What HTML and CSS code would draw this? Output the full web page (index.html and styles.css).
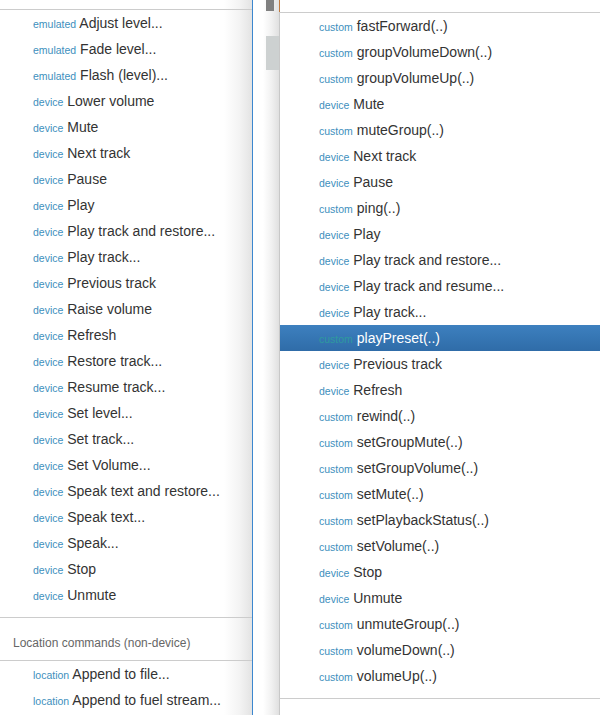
FILE: index.html
```html
<!DOCTYPE html>
<html>
<head>
<meta charset="utf-8">
<link rel="stylesheet" href="styles.css">
</head>
<body>
<div class="page">
  <div class="left-pane">
    <div class="group">
      <ul class="items">
        <li><span class="kind">emulated</span> Adjust level...</li>
        <li><span class="kind">emulated</span> Fade level...</li>
        <li><span class="kind">emulated</span> Flash (level)...</li>
        <li><span class="kind">device</span> Lower volume</li>
        <li><span class="kind">device</span> Mute</li>
        <li><span class="kind">device</span> Next track</li>
        <li><span class="kind">device</span> Pause</li>
        <li><span class="kind">device</span> Play</li>
        <li><span class="kind">device</span> Play track and restore...</li>
        <li><span class="kind">device</span> Play track...</li>
        <li><span class="kind">device</span> Previous track</li>
        <li><span class="kind">device</span> Raise volume</li>
        <li><span class="kind">device</span> Refresh</li>
        <li><span class="kind">device</span> Restore track...</li>
        <li><span class="kind">device</span> Resume track...</li>
        <li><span class="kind">device</span> Set level...</li>
        <li><span class="kind">device</span> Set track...</li>
        <li><span class="kind">device</span> Set Volume...</li>
        <li><span class="kind">device</span> Speak text and restore...</li>
        <li><span class="kind">device</span> Speak text...</li>
        <li><span class="kind">device</span> Speak...</li>
        <li><span class="kind">device</span> Stop</li>
        <li><span class="kind">device</span> Unmute</li>
      </ul>
    </div>
    <div class="group">
      <div class="group-header">Location commands (non-device)</div>
      <ul class="items">
        <li><span class="kind">location</span> Append to file...</li>
        <li><span class="kind">location</span> Append to fuel stream...</li>
      </ul>
    </div>
  </div>
  <div class="gutter">
    <div class="thumb-dark"></div>
    <div class="thumb-light"></div>
  </div>
  <div class="right-pane">
    <div class="combo-top"></div>
    <div class="dropdown">
      <ul class="items">
        <li><span class="kind">custom</span> fastForward(..)</li>
        <li><span class="kind">custom</span> groupVolumeDown(..)</li>
        <li><span class="kind">custom</span> groupVolumeUp(..)</li>
        <li><span class="kind">device</span> Mute</li>
        <li><span class="kind">custom</span> muteGroup(..)</li>
        <li><span class="kind">device</span> Next track</li>
        <li><span class="kind">device</span> Pause</li>
        <li><span class="kind">custom</span> ping(..)</li>
        <li><span class="kind">device</span> Play</li>
        <li><span class="kind">device</span> Play track and restore...</li>
        <li><span class="kind">device</span> Play track and resume...</li>
        <li><span class="kind">device</span> Play track...</li>
        <li class="active"><span class="kind">custom</span> playPreset(..)</li>
        <li><span class="kind">device</span> Previous track</li>
        <li><span class="kind">device</span> Refresh</li>
        <li><span class="kind">custom</span> rewind(..)</li>
        <li><span class="kind">custom</span> setGroupMute(..)</li>
        <li><span class="kind">custom</span> setGroupVolume(..)</li>
        <li><span class="kind">custom</span> setMute(..)</li>
        <li><span class="kind">custom</span> setPlaybackStatus(..)</li>
        <li><span class="kind">custom</span> setVolume(..)</li>
        <li><span class="kind">device</span> Stop</li>
        <li><span class="kind">device</span> Unmute</li>
        <li><span class="kind">custom</span> unmuteGroup(..)</li>
        <li><span class="kind">custom</span> volumeDown(..)</li>
        <li><span class="kind">custom</span> volumeUp(..)</li>
      </ul>
    </div>
    <div class="below"></div>
  </div>
</div>
</body>
</html>
```
FILE: styles.css
```css
html, body {
  margin: 0;
  padding: 0;
  background: #fff;
}
body {
  font-family: "Liberation Sans", Arial, sans-serif;
  color: #333;
}
.page {
  display: flex;
  width: 600px;
  height: 715px;
  overflow: hidden;
}
.left-pane {
  width: 253px;
  flex: none;
  padding-top: 9px;
  box-sizing: border-box;
  border-right: 1px solid #3c87cf;
  background: linear-gradient(to right, #fff 0, #fff 224px, #f3f3f3 240px, #e2e2e2 253px);
  overflow: hidden;
}
.group {
  border-top: 1px solid #cccccc;
}
.items {
  list-style: none;
  margin: 0;
  padding: 0 0 9px 0;
}
.items li {
  height: 26px;
  line-height: 26px;
  font-size: 14px;
  white-space: nowrap;
  color: #333;
}
.left-pane .items li {
  padding-left: 33px;
}
.kind {
  font-size: 10.5px;
  color: #3d8fbd;
}
.group-header {
  height: 43px;
  box-sizing: border-box;
  padding: 16px 0 0 13px;
  line-height: 18px;
  font-size: 12px;
  color: #666;
  border-bottom: 1px solid #cccccc;
}
.gutter {
  width: 26px;
  flex: none;
  box-sizing: border-box;
  padding-left: 13px;
  background: linear-gradient(to right, #fff 0, #fff 10px, #f2f2f2 18px, #e0e0e0 26px);
  display: flex;
  flex-direction: column;
  align-items: flex-start;
}
.thumb-dark {
  width: 8px;
  height: 11px;
  background: #808080;
}
.thumb-light {
  width: 13px;
  height: 34px;
  margin-top: 25px;
  background: #cdd1d1;
}
.right-pane {
  flex: 1;
  display: flex;
  flex-direction: column;
  background: #fff;
}
.combo-top {
  height: 12px;
  border-left: 1px solid #c07a40;
  flex: none;
}
.dropdown {
  border-left: 1px solid #c8c8c8;
  border-top: 1px solid #cccccc;
  border-bottom: 1px solid #cccccc;
  flex: none;
}
.dropdown .items li {
  padding-left: 39px;
}
.dropdown .items li.active {
  background: linear-gradient(to bottom, #3d80bf 0%, #2f6ca8 100%);
  color: #fff;
}
.dropdown .items li.active .kind {
  color: #2e9a9e;
}
.below {
  flex: 1;
  border-left: 1px solid #c8c8c8;
}
```
